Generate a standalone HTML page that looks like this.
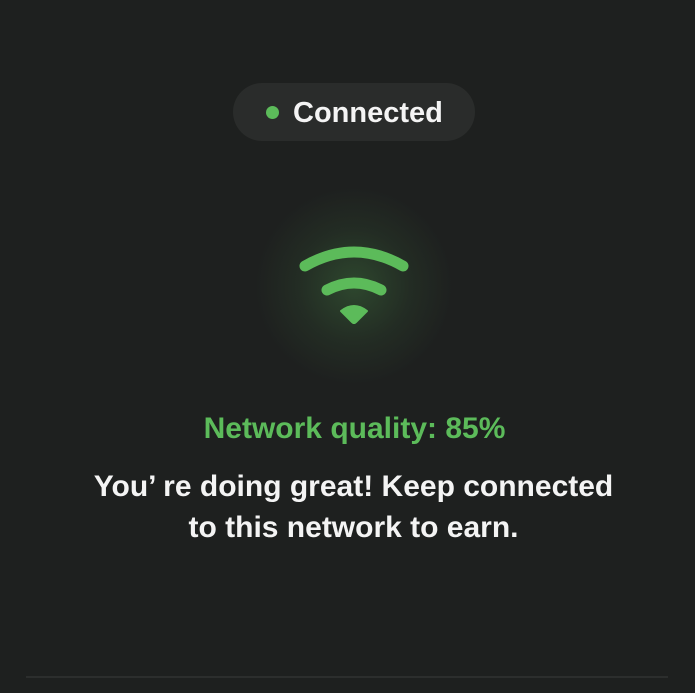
<!DOCTYPE html>
<html><head><style>
html,body{margin:0;padding:0;background:#1e201f;width:695px;height:693px;overflow:hidden;font-family:"Liberation Sans",sans-serif;}
.pill{position:absolute;left:233px;top:83px;width:242px;height:58px;border-radius:29px;background:#2a2c2b;}
.dot{position:absolute;left:266px;top:106px;width:13px;height:13px;border-radius:50%;background:#5cbb5a;}
.ct{position:absolute;left:293px;top:95px;font-size:29px;font-weight:bold;color:#f4f4f4;line-height:36px;}
.glow{position:absolute;left:254px;top:186px;width:200px;height:200px;border-radius:50%;background:radial-gradient(circle,rgba(92,187,90,0.25) 0%,rgba(92,187,90,0.08) 40%,rgba(30,32,31,0) 70%);}
.q{position:absolute;left:0;width:709px;top:412px;text-align:center;font-size:30px;font-weight:bold;color:#5cbb5a;}
.m{position:absolute;left:0;width:707px;top:466px;text-align:center;font-size:30px;font-weight:bold;color:#f4f4f4;line-height:41px;}
.line{position:absolute;left:26px;top:676px;width:642px;height:2px;background:#2c2e2d;}
</style></head><body>
<div class="pill"></div><div class="dot"></div><div class="ct">Connected</div>
<div class="glow"></div>
<svg style="position:absolute;left:0;top:0" width="695" height="693">
<path d="M305 266 Q354 238 403 266" fill="none" stroke="#5cbb5a" stroke-width="11" stroke-linecap="round"/>
<path d="M327 290 Q354 276 381 290" fill="none" stroke="#5cbb5a" stroke-width="11" stroke-linecap="round"/>
<path d="M341 311 Q354 301 367 311 L356 322 Q354 324 352 322 Z" fill="#5cbb5a" stroke="#5cbb5a" stroke-width="2" stroke-linejoin="round"/>
</svg>
<div class="q">Network quality: 85%</div>
<div class="m">You’ re doing great! Keep connected<br>to this network to earn.</div>
<div class="line"></div>
</body></html>
